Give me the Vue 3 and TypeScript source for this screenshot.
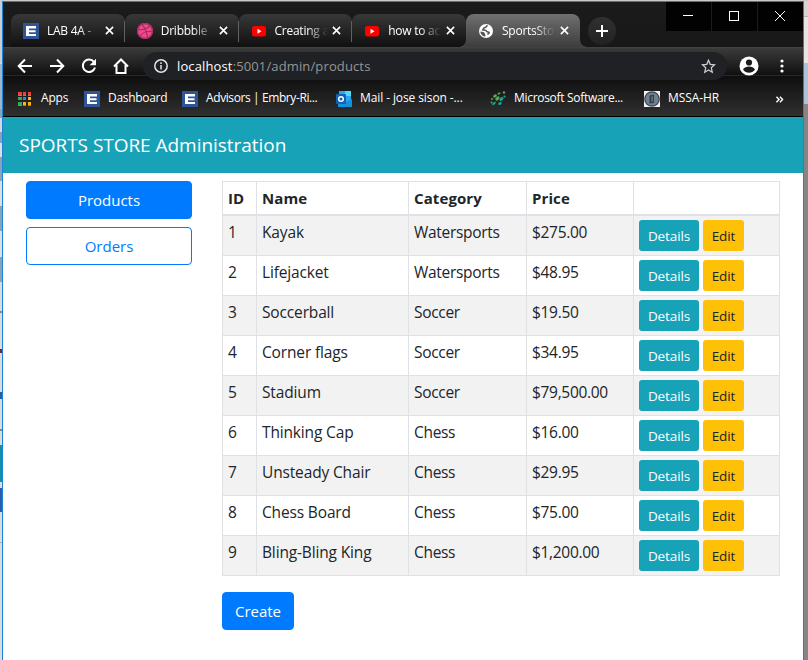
<script setup lang="ts">
interface Tab {
  title: string
  icon: 'e' | 'dribbble' | 'youtube' | 'globe'
  active?: boolean
}
interface Bookmark {
  title: string
  icon: 'apps' | 'e' | 'outlook' | 'leaf' | 'badge'
  key: string
}
interface Product {
  id: number
  name: string
  category: string
  price: string
}

const tabs: Tab[] = [
  { title: 'LAB 4A -', icon: 'e' },
  { title: 'Dribbble', icon: 'dribbble' },
  { title: 'Creating a', icon: 'youtube' },
  { title: 'how to ac', icon: 'youtube' },
  { title: 'SportsSto', icon: 'globe', active: true },
]
const bookmarks: Bookmark[] = [
  { title: 'Apps', icon: 'apps', key: 'apps' },
  { title: 'Dashboard', icon: 'e', key: 'dash' },
  { title: 'Advisors | Embry-Ri...', icon: 'e', key: 'adv' },
  { title: 'Mail - jose sison -...', icon: 'outlook', key: 'mail' },
  { title: 'Microsoft Software...', icon: 'leaf', key: 'soft' },
  { title: 'MSSA-HR', icon: 'badge', key: 'hr' },
]
const products: Product[] = [
  { id: 1, name: 'Kayak', category: 'Watersports', price: '$275.00' },
  { id: 2, name: 'Lifejacket', category: 'Watersports', price: '$48.95' },
  { id: 3, name: 'Soccerball', category: 'Soccer', price: '$19.50' },
  { id: 4, name: 'Corner flags', category: 'Soccer', price: '$34.95' },
  { id: 5, name: 'Stadium', category: 'Soccer', price: '$79,500.00' },
  { id: 6, name: 'Thinking Cap', category: 'Chess', price: '$16.00' },
  { id: 7, name: 'Unsteady Chair', category: 'Chess', price: '$29.95' },
  { id: 8, name: 'Chess Board', category: 'Chess', price: '$75.00' },
  { id: 9, name: 'Bling-Bling King', category: 'Chess', price: '$1,200.00' },
]
</script>

<template>
  <div class="desktop">
    <div class="edge edge-left"></div>
    <div class="window">
      <header class="chrome">
        <div class="strip">
          <div class="tabs">
            <div v-for="(t, i) in tabs" :key="i" class="tab" :class="{ active: t.active, divided: i < 3 }">
              <svg v-if="t.icon === 'e'" class="fav" viewBox="0 0 16 16">
                <rect width="16" height="16" fill="#2f5597" />
                <path d="M3 3h10v2.500H6v1.700h6.500v2H6v1.800h7V13H3z" fill="#fff" />
              </svg>
              <svg v-else-if="t.icon === 'dribbble'" class="fav" viewBox="0 0 16 16">
                <circle cx="8" cy="8" r="8" fill="#ea4c89" />
                <g fill="none" stroke="#a92861" stroke-width="1.1">
                  <circle cx="8" cy="8" r="7.4" />
                  <path d="M5.2 1.3C8 5 10 9.500 10.600 14.900M.8 6.700C5.500 7 10.500 5.800 13 2.600M3.200 13.600C5.500 9 10.500 7.500 15.300 8.700" />
                </g>
              </svg>
              <svg v-else-if="t.icon === 'youtube'" class="fav" viewBox="0 0 16 16">
                <rect x="1" y="3" width="14" height="10.500" rx="2.500" fill="#f00" />
                <path d="M6.500 5.800v5l4-2.500z" fill="#fff" />
              </svg>
              <svg v-else class="fav" viewBox="0 0 16 16">
                <circle cx="8" cy="8" r="7" fill="#fff" />
                <path d="M9.600 2.600C8 3 8.600 4.600 7 4.600S5.400 6 4.800 6.900c1.600.2 3.200-.3 3.600 1.100s2 .6 2.600 1.300-.6 1.600-1.600 1.900" fill="none" stroke="#555" stroke-width="1.500" />
                <path d="M2.300 8.400 6 9.300c1.200.8.600 1.800 1.400 2.400v1.900C4.600 13.400 2.500 11.300 2.300 8.400z" fill="#555" />
              </svg>
              <span class="tab-title">{{ t.title }}</span>
              <svg class="close" viewBox="0 0 10 10"><path d="M1 1l8 8M9 1L1 9" /></svg>
            </div>
            <div class="new-tab">
              <svg viewBox="0 0 12 12"><path d="M6 0v12M0 6h12" /></svg>
            </div>
          </div>
          <div class="controls">
            <span><svg viewBox="0 0 10 10"><path d="M0 4.500h10" /></svg></span>
            <span><svg viewBox="0 0 10 10"><rect x=".5" y=".5" width="9" height="9" /></svg></span>
            <span><svg viewBox="0 0 10 10"><path d="M0 0l10 10M10 0L0 10" /></svg></span>
          </div>
        </div>
        <div class="toolbar">
          <div class="nav">
            <svg viewBox="0 0 16 16"><path d="M15 8H2.500M8 1.500 1.700 8 8 14.500" /></svg>
            <svg viewBox="0 0 16 16"><path d="M1 8h12.500M8 1.500 14.300 8 8 14.500" /></svg>
            <svg viewBox="0 0 16 16"><path d="M13 4A6.200 6.200 0 1 0 14 9.500" /><path d="M15 .8v6.400H8.600z" fill="#fff" stroke="none" /></svg>
            <svg viewBox="0 0 16 16"><path d="M1 8.500 8 1.500l7 7M3.500 7v8h9V7" /></svg>
          </div>
          <div class="address">
            <svg class="info" viewBox="0 0 14 14"><circle cx="7" cy="7" r="6.200" /><path d="M7 6v4.500M7 3.300v1.600" /></svg>
            <span class="url"><b>localhost</b>:5001/admin/products</span>
            <svg class="star" viewBox="0 0 14 14"><path d="M7 1.200 8.600 5l4 .4-3 2.800.9 4.100L7 10.200l-3.500 2.100.9-4.100-3-2.800 4-.4z" /></svg>
          </div>
          <svg class="user" viewBox="0 0 20 20">
            <circle cx="10" cy="10" r="9.500" fill="#fff" />
            <circle cx="10" cy="6.500" r="3.100" fill="#1b1b1b" />
            <path d="M4 13.600c2-4 10-4 12 0-3 4.300-9 4.300-12 0z" fill="#1b1b1b" />
          </svg>
          <svg class="dots" viewBox="0 0 4 14"><circle cx="2" cy="2" r="1.600" /><circle cx="2" cy="7" r="1.600" /><circle cx="2" cy="12" r="1.600" /></svg>
        </div>
        <nav class="bookmarks">
          <div v-for="b in bookmarks" :key="b.key" class="bookmark" :class="b.key">
            <svg v-if="b.icon === 'apps'" viewBox="0 0 16 16">
              <g fill="#ea4335"><rect x="1" y="1" width="4" height="3" /><rect x="6" y="1" width="3" height="3" /><rect x="11" y="1" width="3" height="3" /></g>
              <g fill="#34a853"><rect x="1" y="6" width="4" height="3" /><rect x="1" y="11" width="4" height="3" /></g>
              <rect x="6" y="6" width="3" height="3" fill="#1a8cff" />
              <g fill="#fbb01b"><rect x="11" y="6" width="3" height="3" /><rect x="6" y="11" width="3" height="3" /><rect x="11" y="11" width="3" height="3" /></g>
              <path d="M1 4.500h4M6 4.500h3M11 4.500h3M1 14.500h4M6 14.500h3M11 14.500h3" stroke="#8a8a8a" />
            </svg>
            <svg v-else-if="b.icon === 'e'" viewBox="0 0 16 16">
              <rect width="16" height="16" fill="#2f5597" />
              <path d="M3 3h10v2.500H6v1.700h6.500v2H6v1.800h7V13H3z" fill="#fff" />
            </svg>
            <svg v-else-if="b.icon === 'outlook'" viewBox="0 0 16 16">
              <rect x="3" y="0" width="12" height="11" fill="#28a8ea" />
              <rect x="9" y="0" width="6" height="5" fill="#50d9ff" />
              <path d="M2 8l7 3.500L16 8v8H2z" fill="#1490df" />
              <rect x="0" y="3" width="10" height="10" rx="1" fill="#0f62b8" />
              <circle cx="5" cy="8" r="2.300" fill="none" stroke="#fff" stroke-width="1.500" />
            </svg>
            <svg v-else-if="b.icon === 'leaf'" viewBox="0 0 16 16">
              <g fill="#5da653"><ellipse cx="5" cy="5" rx="2" ry="1.400" transform="rotate(-30 5 5)" /><ellipse cx="9" cy="2.500" rx="1.700" ry="1" transform="rotate(-30 9 2.500)" /><ellipse cx="7.500" cy="7.500" rx="2.500" ry="1.600" transform="rotate(-40 7.500 7.500)" /><circle cx="2" cy="8" r="1" /><circle cx="14" cy="1.500" r="1.200" /><circle cx="1.500" cy="11.500" r="1" /></g>
              <g fill="#16a795"><ellipse cx="11.500" cy="8" rx="2.300" ry="1.500" transform="rotate(-40 11.500 8)" /><circle cx="14.500" cy="5.500" r="1.100" /><ellipse cx="10" cy="12.500" rx="1.800" ry="1.300" transform="rotate(-30 10 12.500)" /><ellipse cx="4" cy="12.500" rx="2.200" ry="1.100" transform="rotate(-40 4 12.500)" /></g>
            </svg>
            <svg v-else viewBox="0 0 16 16">
              <rect width="16" height="16" fill="#f4f4f4" />
              <circle cx="8" cy="8" r="7.800" fill="#39434e" />
              <circle cx="8" cy="8" r="6.600" fill="#71808e" />
              <path d="M5.500 4.500l4.500-1v8.500l-4.500.5z" fill="#353e48" />
              <path d="M7.500 5.500l1.200-.3v5.300l-1.200.3z" fill="#7d8994" />
            </svg>
            <span>{{ b.title }}</span>
          </div>
          <svg class="more" viewBox="0 0 9 8"><path d="M1 .8 4 4 1 7.200M5 .8 8 4 5 7.200" /></svg>
        </nav>
      </header>

      <div class="banner"><span>SPORTS STORE Administration</span></div>

      <div class="content">
        <aside class="side">
          <a class="btn primary products">Products</a>
          <a class="btn outline orders">Orders</a>
        </aside>
        <main>
          <table>
            <colgroup><col class="c1" /><col class="c2" /><col class="c3" /><col class="c4" /><col class="c5" /></colgroup>
            <thead>
              <tr><th>ID</th><th>Name</th><th>Category</th><th>Price</th><th></th></tr>
            </thead>
            <tbody>
              <tr v-for="p in products" :key="p.id">
                <td>{{ p.id }}</td>
                <td class="name">{{ p.name }}</td>
                <td>{{ p.category }}</td>
                <td>{{ p.price }}</td>
                <td class="actions">
                  <div><a class="small details">Details</a><a class="small edit">Edit</a></div>
                </td>
              </tr>
            </tbody>
          </table>
          <a class="btn primary create">Create</a>
        </main>
      </div>
    </div>
    <div class="edge edge-right"></div>
  </div>
</template>

<style>
body {
  margin: 0;
  overflow: hidden;
}
</style>

<style scoped>
* {
  box-sizing: border-box;
}
svg {
  display: block;
  flex: none;
}
.desktop {
  width: 808px;
  height: 660px;
  display: flex;
  padding-top: 1px;
  background: #c9c9c9;
  font-family: "Open Sans", "Noto Sans", sans-serif;
  color: #212529;
}
.edge-left {
  width: 2px;
  background: linear-gradient(#c9cdd1 0 62px, #d8d8d8 62px 63px, #9fb6c9 63px 108px, #86a5ba 108px 117px, #d5d9dc 117px 131px, #86a5ba 131px 142px, #dedede 142px 156px, #86a5ba 156px 180px, #dedede 180px 205px, #86a5ba 205px 230px, #dedede 230px 256px, #86a5ba 256px 281px, #dcdcdc 281px 310px, #889 310px 312px, #dcdcdc 312px 348px, #7b2338 348px 352px, #dcdcdc 352px 391px, #2b5da8 391px 398px, #dcdcdc 398px 428px, #888 428px 430px, #dcdcdc 430px 444px, #148fa8 444px 481px, #dcdcdc 481px 487px, #2b5da8 487px 511px, #dcdcdc 511px 541px, #a5b5cc 541px 542px, #dcdcdc 542px);
}
.edge-right {
  width: 4px;
  background: linear-gradient(#d5d5d5 0 15px, #b5b5b5 15px 16px, #e5e5e5 16px 62px, #b5c0c8 62px 63px, #a9c3d8 63px 103px, #858585 103px);
}
.window {
  width: 802px;
  height: 659px;
  border: solid #1883d7;
  border-width: 1px 1px 0;
  background: #fff;
}
.chrome {
  height: 115px;
  background: linear-gradient(#1b1b1b 0, #181818 45px, #444 45px, #393939 47px, #101010 73px, #2b2b2b 73px, #242424 74px, #0e0e0e 74px, #303030 114px, #000 114px);
}
.strip {
  height: 45px;
  display: flex;
  justify-content: space-between;
}
.tabs {
  display: flex;
  align-items: flex-end;
  padding-left: 8px;
}
.tab {
  position: relative;
  width: 113.75px;
  height: 33px;
  padding: 0 11px 0 12px;
  display: flex;
  align-items: center;
  background: linear-gradient(#383838, #101010);
  border-radius: 8px 8px 0 0;
}
.tab.divided::after {
  content: "";
  position: absolute;
  right: 0;
  top: 7px;
  width: 1px;
  height: 21px;
  background: #606060;
}
.tab.active {
  background: linear-gradient(#707070, #3d3d3d);
}
.tab.active::before,
.tab.active::after {
  content: "";
  position: absolute;
  bottom: 0;
  width: 7px;
  height: 7px;
}
.tab.active::before {
  left: -7px;
  background: radial-gradient(circle at 0 0, transparent 6.500px, #414141 7px);
}
.tab.active::after {
  right: -7px;
  background: radial-gradient(circle at 100% 0, transparent 6.500px, #414141 7px);
}
.fav {
  width: 16px;
  height: 16px;
}
.tab-title {
  width: 56px;
  margin: 0 2px 0 8px;
  white-space: nowrap;
  font-size: 12px;
  letter-spacing: -0.25px;
  line-height: 18px;
  color: #fff;
  mask-image: linear-gradient(90deg, #000 32px, transparent 53px);
}
.close {
  width: 9px;
  height: 9px;
  fill: none;
  stroke: #fff;
  stroke-width: 1.800;
}
.new-tab {
  align-self: flex-end;
  width: 28px;
  height: 28px;
  margin: 0 0 2px 8px;
  border-radius: 50%;
  display: grid;
  place-items: center;
  background: linear-gradient(#303030, #222);
}
.new-tab svg {
  width: 12px;
  height: 12px;
  stroke: #fff;
  stroke-width: 2;
}
.controls {
  display: flex;
  gap: 1px;
  height: 29px;
  background: #1c1c1c;
}
.controls span {
  width: 45px;
  padding: 0 1px 1px 0;
  display: grid;
  place-items: center;
  background: #020202;
}
.controls svg {
  width: 10px;
  height: 10px;
  overflow: visible;
  fill: none;
  stroke: #fff;
  stroke-width: 1;
}
.toolbar {
  height: 38px;
  display: flex;
  align-items: center;
}
.nav {
  display: flex;
  gap: 16px;
  padding-left: 14px;
  width: 140px;
}
.nav svg {
  width: 16px;
  height: 16px;
  fill: none;
  stroke: #fff;
  stroke-width: 2;
}
.address {
  width: 584px;
  height: 28px;
  border-radius: 14px;
  background: #202124;
  display: flex;
  align-items: center;
  padding: 0 11px;
}
.info {
  width: 14px;
  height: 14px;
  fill: none;
  stroke: #e4e4e4;
  stroke-width: 1.500;
}
.url {
  flex: 1;
  margin-left: 9px;
  font-size: 13px;
  line-height: 20px;
  letter-spacing: 0.130px;
  color: #969696;
  white-space: nowrap;
}
.url b {
  font-weight: 400;
  color: #fff;
}
.star {
  width: 15px;
  height: 15px;
  fill: none;
  stroke: #ccc;
  stroke-width: 1.200;
}
.user {
  width: 20px;
  height: 20px;
  margin-left: 12px;
}
.dots {
  width: 4px;
  height: 14px;
  margin-left: 21px;
  fill: #fff;
}
.bookmarks {
  display: flex;
  align-items: center;
  height: 28px;
  padding-left: 14px;
}
.bookmark {
  display: flex;
  align-items: center;
  gap: 8px;
  font-size: 12px;
  line-height: 16px;
  color: #fff;
  white-space: nowrap;
  letter-spacing: -0.3px;
}
.bookmark span {
  margin-bottom: 2px;
}
.bookmark svg {
  width: 16px;
  height: 16px;
}
.apps {
  width: 67px;
  letter-spacing: -0.2px;
}
.dash { width: 98px; }
.adv {
  width: 154px;
  letter-spacing: -0.4px;
}
.mail {
  width: 154px;
  letter-spacing: -0.1px;
}
.soft { width: 154px; }
.hr {
  width: 131px;
  letter-spacing: -0.1px;
}
.more {
  width: 9px;
  height: 7px;
  fill: none;
  stroke: #fff;
  stroke-width: 1.600;
}
.banner {
  height: 56px;
  padding: 0 16px;
  display: flex;
  align-items: center;
  background: #17a2b8;
  color: #fff;
  font-size: 19px;
  letter-spacing: -0.040px;
  white-space: nowrap;
}
.content {
  display: flex;
  padding: 8px 0 0 23px;
  gap: 30px;
}
.side {
  width: 166px;
  display: flex;
  flex-direction: column;
  gap: 8px;
}
.btn {
  display: flex;
  align-items: center;
  justify-content: center;
  height: 38px;
  border: 1px solid #007bff;
  border-radius: 4px;
  font-size: 15px;
}
.primary {
  background: #007bff;
  color: #fff;
}
.outline {
  color: #007bff;
}
.create {
  width: 72px;
  margin-top: 16px;
}
main {
  width: 558px;
}
table {
  width: 558px;
  table-layout: fixed;
  border-collapse: separate;
  border-spacing: 0;
  border: solid #dee2e6;
  border-width: 1px 0 0 1px;
  font-size: 15.500px;
  line-height: 24px;
  letter-spacing: -0.310px;
}
.c1 { width: 34px; }
.c2 { width: 152px; }
.c3 { width: 118px; }
.c4 { width: 107px; }
.c5 { width: 146px; }
th,
td {
  padding: 4px 5px 0;
  vertical-align: top;
  text-align: left;
  white-space: nowrap;
  border: solid #dee2e6;
  border-width: 0 1px 1px 0;
}
th {
  height: 34px;
  border-bottom-width: 2px;
  font-size: 15px;
  font-weight: 700;
  letter-spacing: 0.1px;
}
td {
  height: 40px;
}
.name {
  letter-spacing: -0.150px;
}
tbody tr:nth-child(odd) {
  background: #f2f2f2;
}
.actions div {
  display: flex;
  gap: 4px;
}
.small {
  height: 31px;
  border-radius: 3px;
  font-size: 13.500px;
  letter-spacing: -0.1px;
  line-height: 32px;
  text-align: center;
}
.details {
  width: 60px;
  background: #17a2b8;
  color: #fff;
}
.edit {
  width: 41px;
  background: #ffc107;
}
</style>
